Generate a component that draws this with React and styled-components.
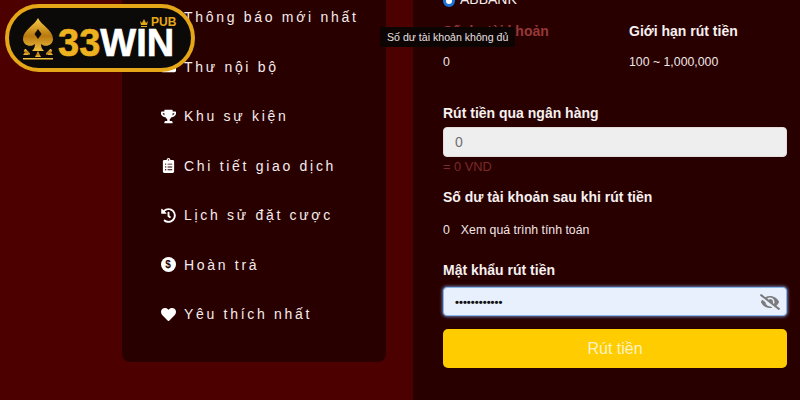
import React from 'react'
import styled, { createGlobalStyle } from 'styled-components'
import { FaTrophy, FaClipboardList, FaHistory, FaHeart, FaEnvelope, FaBell, FaEyeSlash } from 'react-icons/fa'

const GlobalStyle = createGlobalStyle`
  html, body {
    margin: 0;
    padding: 0;
    width: 800px;
    height: 400px;
    overflow: hidden;
    background: #4d0000;
    font-family: "Liberation Sans", Arial, sans-serif;
  }
`

const Page = styled.div`
  position: relative;
  width: 800px;
  height: 400px;
  overflow: hidden;
  display: flex;
  align-items: flex-start;
  padding-left: 122px;
  gap: 27px;
  box-sizing: border-box;
`

const Sidebar = styled.nav`
  width: 264px;
  height: 362px;
  box-sizing: border-box;
  background: #290000;
  border-radius: 0 0 8px 8px;
  padding: 0 0 0 38px;
  margin: 0;
`

const MenuList = styled.div`
  margin-top: -7.5px;
`

const MenuItem = styled.div`
  height: 49.5px;
  display: flex;
  align-items: center;
  gap: 8px;
  color: #f4ecec;
  font-size: 14px;
  letter-spacing: 2.7px;
`

const IconBox = styled.span`
  width: 16px;
  display: flex;
  justify-content: center;
  color: #fff;
  font-size: 15px;
`

const DollarDisc = styled.span`
  width: 15px;
  height: 15px;
  border-radius: 50%;
  background: #fff;
  color: #290000;
  font-size: 10px;
  font-weight: 700;
  letter-spacing: 0;
  display: flex;
  align-items: center;
  justify-content: center;
`

const Main = styled.main`
  flex: 1;
  height: 400px;
  box-sizing: border-box;
  background: #290000;
  padding: 0 13px 0 30px;
  color: #fff;
`

const BankRow = styled.div`
  height: 6px;
  display: flex;
  align-items: flex-end;
  gap: 5px;
  font-size: 14px;
  line-height: 14px;
  color: #f4ecec;
`

const Radio = styled.span`
  width: 12px;
  height: 12px;
  flex: none;
  margin-bottom: -1px;
  border-radius: 50%;
  box-sizing: border-box;
  background: #fff;
  border: 3px solid #1a73d9;
`

const Limits = styled.div`
  display: grid;
  grid-template-columns: 186px 1fr;
  margin-top: 17px;
`

const Heading = styled.div`
  font-size: 14px;
  line-height: 16px;
  font-weight: 700;
  color: ${props => props.$dim ? '#963838' : '#f6f0f0'};
`

const Value = styled.div`
  margin-top: 15px;
  font-size: 12.3px;
  line-height: 16px;
  color: #efe6e6;
`

const BankHeading = styled(Heading)`
  margin-top: 35px;
`

const Field = styled.div`
  position: relative;
  height: ${props => props.$focus ? '29px' : '30px'};
  margin-top: ${props => props.$focus ? '9px' : '6px'};
  box-sizing: border-box;
  border-radius: 4px;
  display: flex;
  align-items: center;
  padding: 0 11px;
  background: ${props => props.$focus ? '#e8f0fe' : '#eeeeee'};
  border: 1px solid ${props => props.$focus ? '#86b7e8' : '#e6dcdc'};
  box-shadow: ${props => props.$focus ? '0 0 3px 1px rgba(130, 170, 240, 0.7)' : 'none'};
  color: ${props => props.$focus ? '#111' : '#6f6f6f'};
  font-size: 14px;
`

const Dots = styled.span`
  font-size: 11.3px;
  letter-spacing: 0;
  font-weight: 700;
`

const EyeIcon = styled.span`
  position: absolute;
  right: 6px;
  top: 4px;
  color: #7b7b7b;
  font-size: 20px;
  display: flex;
`

const Rate = styled.div`
  margin-top: 2px;
  font-size: 12.8px;
  line-height: 15px;
  color: #7a2a2a;
`

const AfterHeading = styled(Heading)`
  margin-top: 15px;
`

const CalcRow = styled.div`
  display: flex;
  gap: 11px;
  margin-top: 17px;
  font-size: 12.3px;
  line-height: 16px;
  color: #efe6e6;
`

const PasswordHeading = styled(Heading)`
  margin-top: 24px;
`

const Submit = styled.button`
  display: block;
  width: 100%;
  height: 39px;
  margin-top: 13px;
  border: 0;
  border-radius: 5px;
  background: #ffcc00;
  color: #fdf3c4;
  font-family: inherit;
  font-size: 16px;
`

const Tooltip = styled.div`
  position: absolute;
  left: 380px;
  top: 27px;
  height: 20px;
  padding: 0 7px;
  display: flex;
  align-items: center;
  border-radius: 2px;
  background: #0d0404;
  color: #e8e0e0;
  font-size: 10.6px;
  white-space: nowrap;
  &::after {
    content: '';
    position: absolute;
    left: 62px;
    bottom: -3px;
    border: 3px solid transparent;
    border-bottom: 0;
    border-top-color: #0d0404;
  }
`

const Logo = styled.div`
  position: absolute;
  left: 5px;
  top: 4px;
  width: 190px;
  height: 68px;
  box-sizing: border-box;
  border: 4px solid #e5a717;
  border-radius: 34px;
  background: #0c0a08;
  display: flex;
  align-items: center;
  padding-left: 13px;
`

const SpadeWrap = styled.span`
  display: flex;
  margin-top: 3px;
`

const LogoText = styled.div`
  font-family: "Liberation Sans", Arial, sans-serif;
  font-size: 38px;
  line-height: 38px;
  font-weight: 700;
  margin-left: 4px;
  margin-top: 10px;
  color: #fff;
  -webkit-text-stroke: 0.6px currentColor;
`

const Gold = styled.span`
  color: #eeb11f;
`

const PubMark = styled.div`
  position: absolute;
  left: 131px;
  top: 9px;
  display: flex;
  align-items: center;
  gap: 3px;
  font-size: 12px;
  line-height: 11px;
  font-weight: 700;
  color: #e5a717;
`

const Spade = () => (
  <svg width="32" height="44" viewBox="0 0 32 44">
    <defs>
      <linearGradient id="gold" x1="0" y1="0" x2="0" y2="1">
        <stop offset="0" stopColor="#f7cc45" />
        <stop offset="0.55" stopColor="#b8780f" />
        <stop offset="1" stopColor="#f2c040" />
      </linearGradient>
    </defs>
    <path
      fill="url(#gold)"
      d="M16 0 C19 7 31 12 31 21 C31 27 24 30 19 26 C19 29 20 31 22 33 L10 33 C12 31 13 29 13 26 C8 30 1 27 1 21 C1 12 13 7 16 0 Z"
    />
    <path fill="#0c0a08" d="M16 11 l3.5 5 -3.5 5 -3.5 -5 Z" />
    <path fill="url(#gold)" d="M4 31 c1 2 4 3 4 5 c0 1 -2 1 -2 0 l0 1 l-5 0 c1-1 1-2 2-3 c-1 0 -2-1 0-3 Z M28 31 c-1 2 -4 3 -4 5 c0 1 2 1 2 0 l0 1 l5 0 c-1-1 -1-2 -2-3 c1 0 2-1 0-3 Z" />
    <rect x="1" y="40" width="30" height="1.5" fill="#f2c040" />
    <path fill="url(#gold)" d="M16 33 l3 6 h-6 Z" />
  </svg>
)

const Crown = () => (
  <svg width="8" height="8" viewBox="0 0 8 8">
    <path fill="#e5a717" d="M0 2 L2 4 L4 0 L6 4 L8 2 L7 6 H1 Z M1 7 H7 V8 H1 Z" />
  </svg>
)

const menu = [
  { icon: <FaBell />, label: 'Thông báo mới nhất' },
  { icon: <FaEnvelope />, label: 'Thư nội bộ' },
  { icon: <FaTrophy />, label: 'Khu sự kiện' },
  { icon: <FaClipboardList />, label: 'Chi tiết giao dịch' },
  { icon: <FaHistory />, label: 'Lịch sử đặt cược' },
  { icon: <DollarDisc>$</DollarDisc>, label: 'Hoàn trả' },
  { icon: <FaHeart />, label: 'Yêu thích nhất' }
]

export default function App() {
  return (
    <Page>
      <GlobalStyle />
      <Sidebar>
        <MenuList>
          {menu.map(item => (
            <MenuItem key={item.label}>
              <IconBox>{item.icon}</IconBox>
              {item.label}
            </MenuItem>
          ))}
        </MenuList>
      </Sidebar>
      <Main>
        <BankRow>
          <Radio />
          ABBANK
        </BankRow>
        <Limits>
          <div>
            <Heading $dim>Số dư tài khoản</Heading>
            <Value>0</Value>
          </div>
          <div>
            <Heading>Giới hạn rút tiền</Heading>
            <Value>100 ~ 1,000,000</Value>
          </div>
        </Limits>
        <BankHeading>Rút tiền qua ngân hàng</BankHeading>
        <Field>0</Field>
        <Rate>= 0 VND</Rate>
        <AfterHeading>Số dư tài khoản sau khi rút tiền</AfterHeading>
        <CalcRow>
          <span>0</span>
          <span>Xem quá trình tính toán</span>
        </CalcRow>
        <PasswordHeading>Mật khẩu rút tiền</PasswordHeading>
        <Field $focus>
          <Dots>••••••••••••</Dots>
          <EyeIcon><FaEyeSlash /></EyeIcon>
        </Field>
        <Submit>Rút tiền</Submit>
      </Main>
      <Tooltip>Số dư tài khoản không đủ</Tooltip>
      <Logo>
        <SpadeWrap><Spade /></SpadeWrap>
        <LogoText><Gold>33</Gold>WIN</LogoText>
        <PubMark><Crown />PUB</PubMark>
      </Logo>
    </Page>
  )
}
